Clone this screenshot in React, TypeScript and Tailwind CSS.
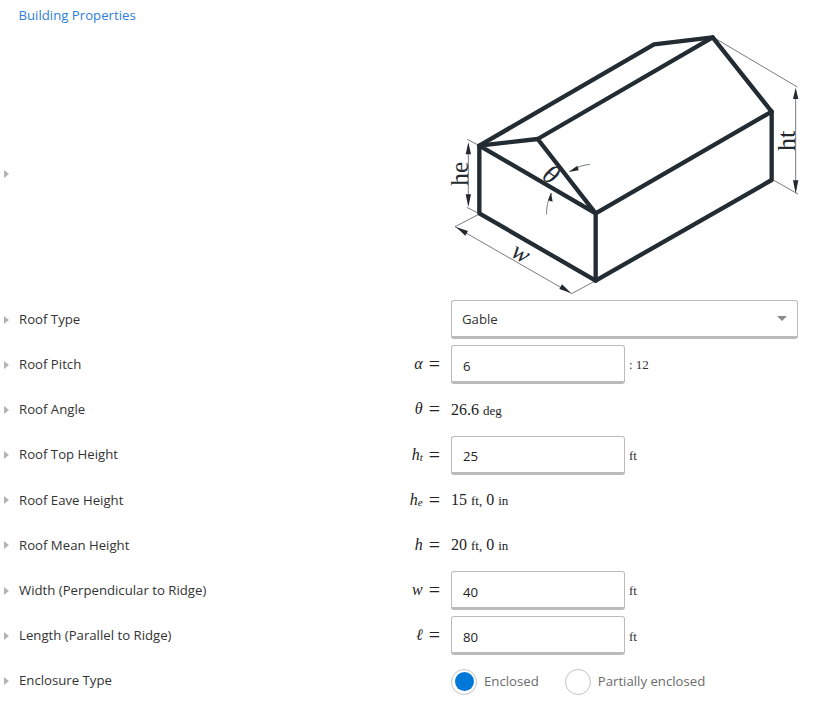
import React from "react";

const Tri = () => (
  <svg width="5" height="8" viewBox="0 0 5 8" className="block shrink-0">
    <path d="M0 0L5 4L0 8Z" fill="#b4b4b4" />
  </svg>
);

const Building = () => (
  <svg width="373" height="275" viewBox="0 0 1119 825" className="block">
    <g stroke="#555b60" strokeWidth="2.4" fill="none">
      <path d="M825 40L1072 186M1000 465L1074 507" />
      <path d="M1067 195V498" />
      <path d="M82 343L118 362M80 547L118 566" />
      <path d="M85 360V538" />
      <path d="M118 567L45 605L395 806L467 767" />
      <path d="M450 418C430 420 410 426 392 438" />
      <path d="M320 568C319 545 324 525 335 505" />
    </g>
    <g fill="#23292e">
      <path d="M1067 188L1059 222H1075Z" />
      <path d="M1067 506L1059 466H1075Z" />
      <path d="M85 352L77 388H93Z" />
      <path d="M85 546L77 508H93Z" />
      <path d="M48 606L84 618L76 632Z" />
      <path d="M393 804L358 792L366 778Z" />
      <path d="M386 441L412 422L416 436Z" />
      <path d="M333 502L338 530L324 526Z" />
    </g>
    <g stroke="#232b33" strokeWidth="13" fill="none" strokeLinejoin="round" strokeLinecap="round">
      <path d="M118 362L642 58L818 37L995 260V465L467 767L118 565Z" />
      <path d="M118 362L293 342L818 37M293 342L467 565L995 260M118 362L467 565V767" />
    </g>
    <g fill="#23292e" style={{ fontFamily: "'Liberation Serif', serif" }}>
      <text transform="translate(1066 378) rotate(-90)" fontSize="78">ht</text>
      <text transform="translate(84 482) rotate(-90)" fontSize="76">he</text>
      <text transform="translate(209 692) rotate(30)" fontSize="76" fontStyle="italic">w</text>
      <text transform="translate(302 459) rotate(35)" fontSize="80" fontStyle="italic" textAnchor="start">θ</text>
    </g>
  </svg>
);

const Eq = ({ v, sub }: { v: string; sub?: string }) => (
  <span className="flex items-center whitespace-nowrap text-[16px] leading-none text-[#222]">
    <i>{v}</i>
    {sub && <i className="relative top-[3px] text-[11px]">{sub}</i>}
    <span className="ml-[6px] mr-[1px] text-[20px] leading-none">=</span>
  </span>
);

const Num = ({ big, small }: { big: string; small: string }) => (
  <>
    <span className="text-[16px]">{big}</span>
    <span className="ml-[4px] text-[13px]">{small}</span>
  </>
);

const Input = ({ value, unit }: { value: string; unit: string }) => (
  <div className="flex items-center">
    <div className="flex h-[39px] w-[174px] items-center rounded-[3px] border border-b-[3px] border-[#bbbbbb] bg-white pl-[11px] pt-[6px] text-[13.2px] text-[#222]">
      {value}
    </div>
    <span className="ml-[4px] pt-[1px] text-[13px] text-[#333] [font-family:'Liberation_Serif',serif]">{unit}</span>
  </div>
);

const Row = ({
  label,
  math,
  children,
}: {
  label: string;
  math?: React.ReactNode;
  children: React.ReactNode;
}) => (
  <div className="flex h-[45.2px] items-start">
    <div className="flex h-[39px] w-[410px] items-center pl-[4px]">
      <Tri />
      <span className="ml-[10px] pt-[0.4px] text-[13.2px] text-[#333]">{label}</span>
    </div>
    <div className="flex h-[39px] w-[31px] items-center justify-end pb-[1px] [font-family:'Liberation_Serif',serif]">
      {math}
    </div>
    <div className="ml-[10px] flex h-[39px] items-center">{children}</div>
  </div>
);

const Static = ({ children }: { children: React.ReactNode }) => (
  <div className="text-[#222] [font-family:'Liberation_Serif',serif]">{children}</div>
);

const Radio = ({ label, on }: { label: string; on?: boolean }) => (
  <div className="flex items-center">
    <span className="flex h-[26px] w-[26px] items-center justify-center rounded-full border border-[#c4c4c4] bg-white">
      {on && <span className="h-[19px] w-[19px] rounded-full bg-[#0078d7]" />}
    </span>
    <span className="ml-[7px] text-[13.2px] text-[#6b6b6b]">{label}</span>
  </div>
);

export default function App() {
  return (
    <div className="h-[709px] w-[813px] overflow-hidden bg-white [font-family:'Open_Sans',sans-serif]">
      <div className="flex h-[30px] items-start pl-[18.5px] pt-[6px] text-[13.2px] leading-[18px] text-[#2f7ed8]">
        Building Properties
      </div>
      <div className="flex h-[270px] items-start">
        <div className="w-[440px] pl-[4px] pt-[140px]">
          <Tri />
        </div>
        <div className="-mt-[5px]">
          <Building />
        </div>
      </div>
      <Row label="Roof Type">
        <div className="flex h-[39px] w-[347px] items-center justify-between rounded-[3px] border border-b-[3px] border-[#bbbbbb] bg-white pl-[10px] pr-[10px] text-[13.2px] text-[#333]">
          <span className="pt-[2px]">Gable</span>
          <svg width="10" height="5" viewBox="0 0 10 5">
            <path d="M0 0H10L5 5Z" fill="#8a8a8a" />
          </svg>
        </div>
      </Row>
      <Row label="Roof Pitch" math={<Eq v="α" />}>
        <Input value="6" unit=": 12" />
      </Row>
      <Row label="Roof Angle" math={<Eq v="θ" />}>
        <Static>
          <Num big="26.6" small="deg" />
        </Static>
      </Row>
      <Row label="Roof Top Height" math={<Eq v="h" sub="t" />}>
        <Input value="25" unit="ft" />
      </Row>
      <Row label="Roof Eave Height" math={<Eq v="h" sub="e" />}>
        <Static>
          <Num big="15" small="ft," /> <Num big="0" small="in" />
        </Static>
      </Row>
      <Row label="Roof Mean Height" math={<Eq v="h" />}>
        <Static>
          <Num big="20" small="ft," /> <Num big="0" small="in" />
        </Static>
      </Row>
      <Row label="Width (Perpendicular to Ridge)" math={<Eq v="w" />}>
        <Input value="40" unit="ft" />
      </Row>
      <Row label="Length (Parallel to Ridge)" math={<Eq v="ℓ" />}>
        <Input value="80" unit="ft" />
      </Row>
      <Row label="Enclosure Type">
        <div className="flex items-center gap-[26px] pt-[1px]">
          <Radio label="Enclosed" on />
          <Radio label="Partially enclosed" />
        </div>
      </Row>
    </div>
  );
}
